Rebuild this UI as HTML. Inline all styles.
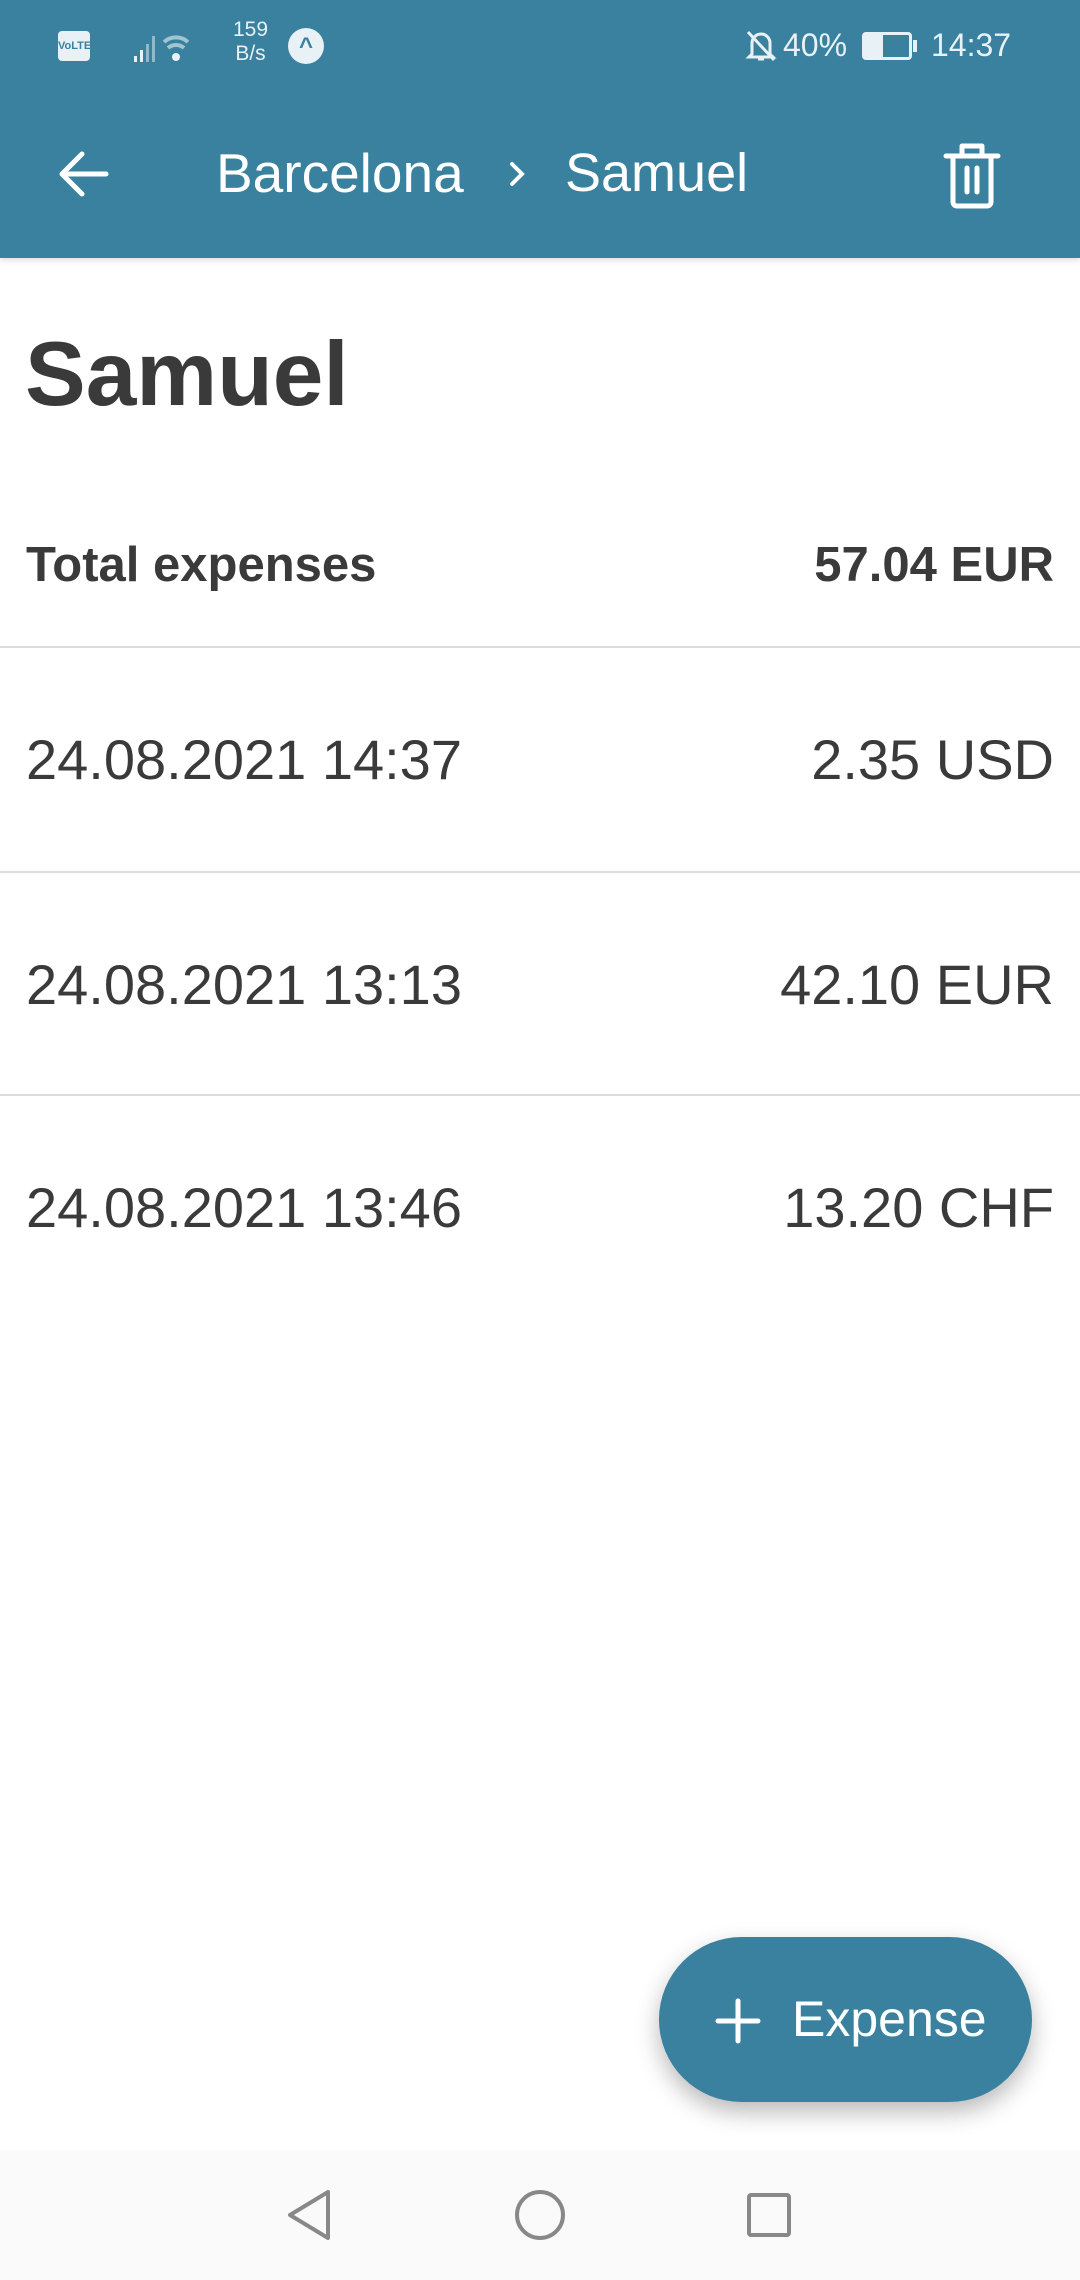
<!DOCTYPE html>
<html><head><meta charset="utf-8"><style>
*{margin:0;padding:0;box-sizing:border-box}
body{width:1080px;height:2280px;position:relative;background:#fff;font-family:"Liberation Sans",sans-serif;color:#3a3a3a;overflow:hidden}
.hdr{position:absolute;left:0;top:0;width:1080px;height:258px;background:#39819e;color:#fff;box-shadow:0 2px 6px rgba(0,0,0,.15)}
.abs{position:absolute;white-space:nowrap}
.div{position:absolute;left:0;width:1080px;height:2px;background:#dcdcdc}
.row{font-size:56px;line-height:60px}
.nav{position:absolute;left:0;top:2150px;width:1080px;height:130px;background:#fafafa}
.fab{position:absolute;left:659px;top:1937px;width:373px;height:165px;border-radius:83px;background:#39819e;box-shadow:0 10px 24px rgba(0,0,0,.28);color:#fff}
</style></head><body>
<div class="hdr">
 <div class="abs" style="left:58px;top:31px;width:32px;height:30px;background:#e8f1f5;border-radius:4px;font-size:11px;font-weight:bold;color:#39819e;text-align:center;line-height:30px;overflow:hidden">VoLTE</div>
 <svg class="abs" style="left:134px;top:26px" width="90" height="40"><g fill="#e8f1f5"><rect x="0" y="30" width="3" height="6"/><rect x="6" y="24" width="3" height="12"/><rect x="12" y="18" width="3" height="18" opacity=".5"/><rect x="18" y="10" width="3" height="26" opacity=".5"/></g><path d="M30 16a18 18 0 0 1 24 0M34 22a12 12 0 0 1 16 0" stroke="#e8f1f5" stroke-width="4" fill="none" opacity=".6"/><circle cx="42" cy="31" r="4" fill="#e8f1f5"/></svg>
 <div class="abs" style="left:233px;top:18px;font-size:21px;line-height:24px;text-align:center;color:#e8f1f5">159<br>B/s</div>
 <div class="abs" style="left:288px;top:28px;width:36px;height:36px;border-radius:50%;background:#e8f1f5;color:#39819e;font-size:24px;font-weight:bold;text-align:center;line-height:38px">^</div>
 <svg class="abs" style="left:744px;top:28px" width="34" height="36"><path d="M8 26V15a9 9 0 0 1 18 0v11l3 3H5z M14 31h6" stroke="#e8f1f5" stroke-width="3" fill="none"/><path d="M4 4l26 28" stroke="#e8f1f5" stroke-width="3"/></svg>
 <div class="abs" style="left:783px;top:27px;font-size:32px;color:#e8f1f5">40%</div>
 <div class="abs" style="left:862px;top:32px;width:50px;height:28px;border:3px solid #e8f1f5;border-radius:4px"><div style="width:18px;height:100%;background:#e8f1f5"></div></div>
 <div class="abs" style="left:913px;top:40px;width:4px;height:12px;background:#e8f1f5"></div>
 <div class="abs" style="left:931px;top:27px;font-size:32px;color:#e8f1f5">14:37</div>
 <svg class="abs" style="left:56px;top:148px" width="56" height="52"><path d="M50 26H6M26 6L6 26l20 20" stroke="#fff" stroke-width="5" fill="none" stroke-linecap="round" stroke-linejoin="round"/></svg>
 <div class="abs" style="left:216px;top:143px;font-size:55px;line-height:60px">Barcelona</div>
 <svg class="abs" style="left:506px;top:158px" width="24" height="32"><path d="M6 6l10 10-10 10" stroke="#fff" stroke-width="4" fill="none" stroke-linecap="round"/></svg>
 <div class="abs" style="left:565px;top:143px;font-size:54px;line-height:60px">Samuel</div>
 <svg class="abs" style="left:940px;top:138px" width="64" height="72"><path d="M6 18h52M22 18V8h20v10M13 18v46a4 4 0 0 0 4 4h30a4 4 0 0 0 4-4V18M27 30v24M37 30v24" stroke="#fff" stroke-width="5" fill="none" stroke-linecap="round" stroke-linejoin="round"/></svg>
</div>
<div class="abs" style="left:25px;top:320px;font-size:91px;font-weight:bold;line-height:110px">Samuel</div>
<div class="abs" style="left:26px;top:537px;font-size:49px;font-weight:bold;line-height:56px">Total expenses</div>
<div class="abs" style="right:26px;top:537px;font-size:49px;font-weight:bold;line-height:56px">57.04 EUR</div>
<div class="div" style="top:646px"></div>
<div class="abs row" style="left:26px;top:730px">24.08.2021 14:37</div>
<div class="abs row" style="right:26px;top:730px">2.35 USD</div>
<div class="div" style="top:871px"></div>
<div class="abs row" style="left:26px;top:955px">24.08.2021 13:13</div>
<div class="abs row" style="right:26px;top:955px">42.10 EUR</div>
<div class="div" style="top:1094px"></div>
<div class="abs row" style="left:26px;top:1178px">24.08.2021 13:46</div>
<div class="abs row" style="right:26px;top:1178px">13.20 CHF</div>
<div class="fab">
 <svg class="abs" style="left:55px;top:60px" width="48" height="48"><path d="M24 4v40M4 24h40" stroke="#fff" stroke-width="5" stroke-linecap="round"/></svg>
 <div class="abs" style="left:133px;top:52px;font-size:50px;line-height:60px">Expense</div>
</div>
<div class="nav">
 <svg class="abs" style="left:284px;top:38px" width="50" height="54"><path d="M44 4L6 27l38 23z" stroke="#888" stroke-width="4" fill="none" stroke-linejoin="round"/></svg>
 <svg class="abs" style="left:513px;top:38px" width="54" height="54"><circle cx="27" cy="27" r="23" stroke="#888" stroke-width="4" fill="none"/></svg>
 <div class="abs" style="left:747px;top:43px;width:44px;height:44px;border:4px solid #888;border-radius:4px"></div>
</div>
</body></html>
